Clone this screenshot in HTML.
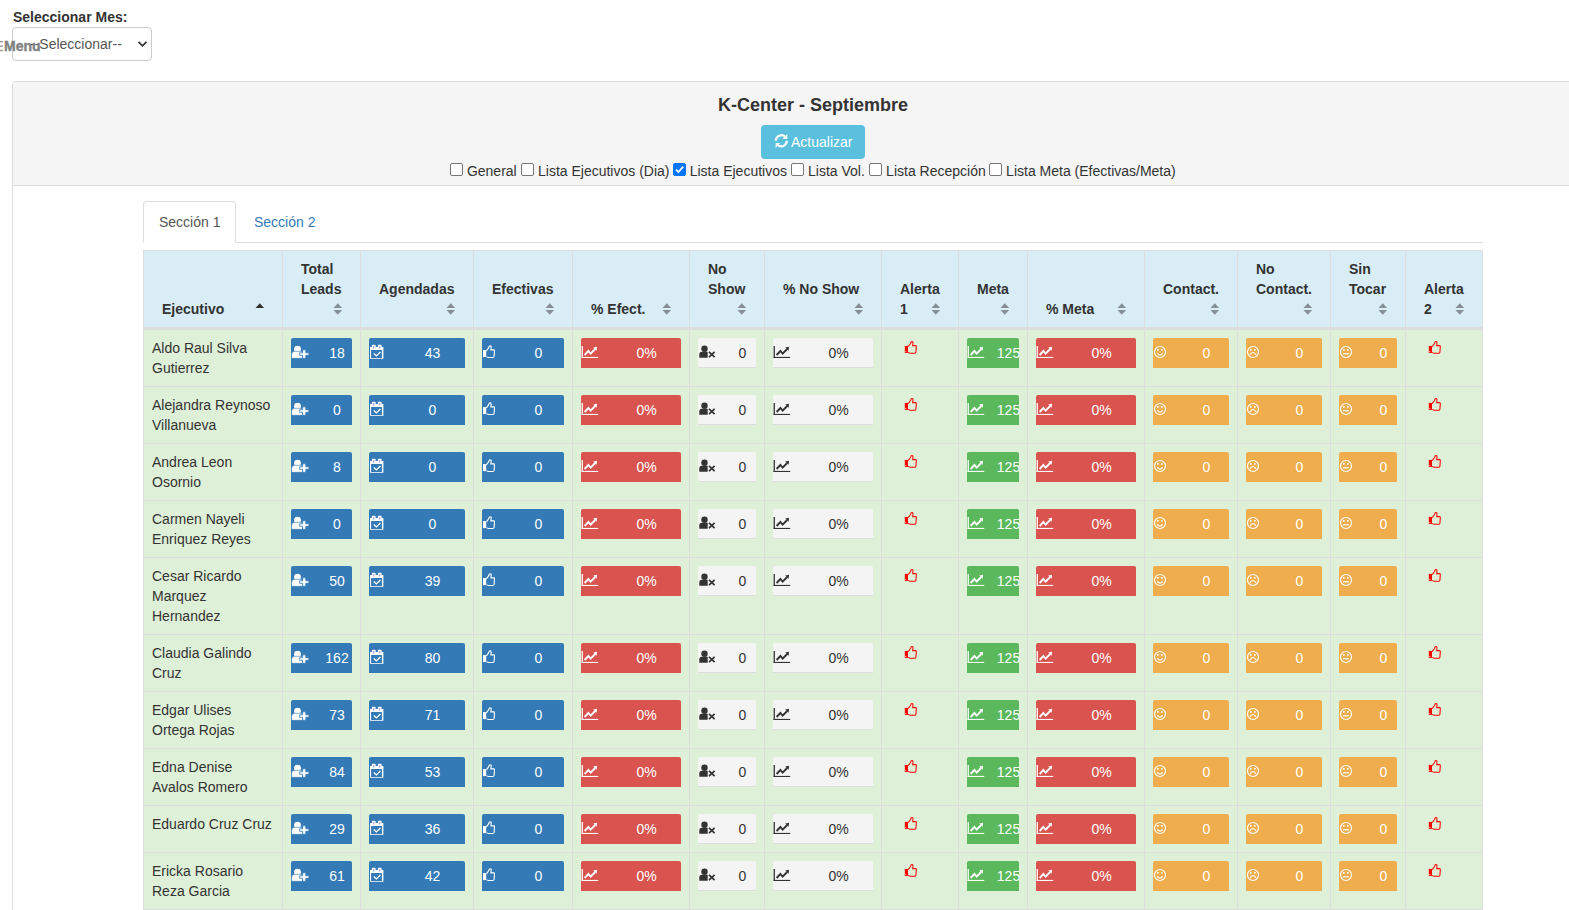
<!DOCTYPE html>
<html><head><meta charset="utf-8"><title>K-Center</title>
<style>
*{box-sizing:border-box}
html,body{margin:0;padding:0;background:#fff;overflow:hidden}
body{font-family:"Liberation Sans",sans-serif;font-size:14px;line-height:20px;color:#333;width:1569px;height:910px;position:relative}
.abs{position:absolute}
#lbl{left:13px;top:7px;font-weight:bold;white-space:nowrap}
#sel{left:12px;top:27px;width:140px;height:34px;border:1px solid #ccc;border-radius:4px;background:#fff}
#seltxt{left:30px;top:34px;color:#555;white-space:nowrap}
#menu{left:4px;top:36px;font-weight:bold;color:#808080;white-space:nowrap;-webkit-text-stroke:0.35px #808080}
#panel{left:12px;top:81px;width:1602px;height:900px;border:1px solid #ddd;border-radius:4px;background:#fff}
#ph{left:0;top:0;width:100%;height:104px;background:#f5f5f5;border-bottom:1px solid #ddd;border-radius:3px 3px 0 0}
#title{left:0;width:1600px;top:12px;text-align:center;font-size:18px;font-weight:bold;line-height:22px}
#act{left:748px;top:43px;width:104px;height:34px;background:#5bc0de;border-radius:4px;color:#fff}
#act span{position:absolute;left:30px;top:7px}
#chk{left:0;width:1600px;top:0;height:100px}
.cbt{position:absolute;top:79px;white-space:nowrap}
.cb{position:absolute;top:81px;width:13px;height:13px;border:1px solid #767676;border-radius:2px;background:#fff}
.cb.on{background:#0075ff;border-color:#0075ff}
.cb.on svg{position:absolute;left:0;top:0;width:11px;height:11px}
#tabs{left:143px;top:201px;width:1340px;height:42px;border-bottom:1px solid #ddd}
.tab{position:absolute;top:0;height:42px;padding:10px 15px;line-height:20px;white-space:nowrap}
#t1{left:0;width:93px;border:1px solid #ddd;border-bottom-color:#fff;border-radius:4px 4px 0 0;background:#fff;color:#555}
#t2{left:96px;top:1px;color:#337ab7}
table{position:absolute;left:143px;top:250px;border-collapse:collapse;table-layout:fixed;width:1340px}
th,td{border:1px solid #ddd;padding:8px;line-height:20px;vertical-align:top;text-align:left}
th{background:#d9edf7;vertical-align:bottom;padding-left:18px;position:relative;height:77px;white-space:nowrap;font-weight:bold}
thead tr{border-bottom:3px solid #ddd}
thead th{border-bottom:3px solid #ddd}
td{background:#dff0d8}
.srt{position:absolute;right:17px;bottom:12px;width:10px;height:12px}
.b{position:relative;height:30px;border-radius:2px 2px 0 0;color:#fff;overflow:hidden}
.b span{position:absolute;left:31px;right:0;top:5px;display:flex;justify-content:center;white-space:nowrap}
.b .ic{position:absolute;left:0;top:0;width:30px;height:30px;overflow:visible}
.bp{background:#337ab7}
.bd{background:#d9534f}
.bs{background:#5cb85c}
.bw{background:#f0ad4e}
.bg{background:#f4f4f4;color:#333;border-bottom:1px solid #ddd}
.th{position:absolute;width:16px;height:16px;overflow:visible}
</style></head><body>
<div id="lbl" class="abs">Seleccionar Mes:</div>
<div id="sel" class="abs"></div>
<div id="seltxt" class="abs">--Seleccionar--</div>
<svg class="abs" style="left:137px;top:40px" width="11" height="8"><path d="M1.5 1.8 L5.5 5.8 L9.5 1.8" stroke="#333" stroke-width="1.8" fill="none"/></svg>
<div id="menu" class="abs">Menu</div>
<svg class="abs" style="left:0;top:40px" width="4" height="12"><rect x="-10" y="1" width="13" height="1.4" fill="#999"/><rect x="-10" y="5.4" width="13" height="1.4" fill="#999"/><rect x="-10" y="9.8" width="13" height="1.4" fill="#999"/></svg>
<div id="panel" class="abs"><div id="ph" class="abs">
<div id="title" class="abs">K-Center - Septiembre</div>
<div id="act" class="abs"><svg class="abs" style="left:12.5px;top:8px;overflow:visible" width="15" height="16" viewBox="0 0 15 16"><path d="M1.8 7.8 A5.5 5.5 0 0 1 11.2 3.9" stroke="#fff" stroke-width="2.2" fill="none"/><path d="M13.3 1 V5.9 H8.5 Z" fill="#fff"/><path d="M12.8 7.8 A5.5 5.5 0 0 1 3.4 11.7" stroke="#fff" stroke-width="2.2" fill="none"/><path d="M1.6 15 V10.1 H6.2 Z" fill="#fff"/></svg><span>Actualizar</span></div>
<div id="chk" class="abs"><span class="cb" style="left:437.1px"></span><span class="cbt" style="left:453.9px">General</span><span class="cb" style="left:508.2px"></span><span class="cbt" style="left:525.0px">Lista Ejecutivos (Dia)</span><span class="cb on" style="left:659.9px"><svg viewBox="0 0 11 11"><path d="M2 5.6 L4.4 8 L9.2 2.6" stroke="#fff" stroke-width="1.8" fill="none"/></svg></span><span class="cbt" style="left:676.7px">Lista Ejecutivos</span><span class="cb" style="left:778.2px"></span><span class="cbt" style="left:795.0px">Lista Vol.</span><span class="cb" style="left:856.3px"></span><span class="cbt" style="left:873.1px">Lista Recepción</span><span class="cb" style="left:976.3px"></span><span class="cbt" style="left:993.1px">Lista Meta (Efectivas/Meta)</span></div>
</div></div>
<div id="tabs" class="abs"><div id="t1" class="tab">Sección 1</div><div id="t2" class="tab">Sección 2</div></div>
<table><colgroup><col style="width:139px"><col style="width:78px"><col style="width:113px"><col style="width:99px"><col style="width:117px"><col style="width:75px"><col style="width:117px"><col style="width:77px"><col style="width:69px"><col style="width:117px"><col style="width:93px"><col style="width:93px"><col style="width:75px"><col style="width:77px"></colgroup>
<thead><tr>
<th>&nbsp;<br>&nbsp;<br>Ejecutivo<svg class="srt" viewBox="0 0 10 12" overflow="visible"><path d="M0.5 5 L4.8 0.2 L9.1 5 Z" fill="#333"/></svg></th>
<th>Total<br>Leads<br>&nbsp;<svg class="srt" viewBox="0 0 10 12" overflow="visible"><path d="M0.5 5 L4.8 0.2 L9.1 5 Z M0.5 7 L9.1 7 L4.8 11.8 Z" fill="#868f95"/></svg></th>
<th>&nbsp;<br>Agendadas<br>&nbsp;<svg class="srt" viewBox="0 0 10 12" overflow="visible"><path d="M0.5 5 L4.8 0.2 L9.1 5 Z M0.5 7 L9.1 7 L4.8 11.8 Z" fill="#868f95"/></svg></th>
<th>&nbsp;<br>Efectivas<br>&nbsp;<svg class="srt" viewBox="0 0 10 12" overflow="visible"><path d="M0.5 5 L4.8 0.2 L9.1 5 Z M0.5 7 L9.1 7 L4.8 11.8 Z" fill="#868f95"/></svg></th>
<th>&nbsp;<br>&nbsp;<br>% Efect.<svg class="srt" viewBox="0 0 10 12" overflow="visible"><path d="M0.5 5 L4.8 0.2 L9.1 5 Z M0.5 7 L9.1 7 L4.8 11.8 Z" fill="#868f95"/></svg></th>
<th>No<br>Show<br>&nbsp;<svg class="srt" viewBox="0 0 10 12" overflow="visible"><path d="M0.5 5 L4.8 0.2 L9.1 5 Z M0.5 7 L9.1 7 L4.8 11.8 Z" fill="#868f95"/></svg></th>
<th>&nbsp;<br>% No Show<br>&nbsp;<svg class="srt" viewBox="0 0 10 12" overflow="visible"><path d="M0.5 5 L4.8 0.2 L9.1 5 Z M0.5 7 L9.1 7 L4.8 11.8 Z" fill="#868f95"/></svg></th>
<th>&nbsp;<br>Alerta<br>1<svg class="srt" viewBox="0 0 10 12" overflow="visible"><path d="M0.5 5 L4.8 0.2 L9.1 5 Z M0.5 7 L9.1 7 L4.8 11.8 Z" fill="#868f95"/></svg></th>
<th>&nbsp;<br>Meta<br>&nbsp;<svg class="srt" viewBox="0 0 10 12" overflow="visible"><path d="M0.5 5 L4.8 0.2 L9.1 5 Z M0.5 7 L9.1 7 L4.8 11.8 Z" fill="#868f95"/></svg></th>
<th>&nbsp;<br>&nbsp;<br>% Meta<svg class="srt" viewBox="0 0 10 12" overflow="visible"><path d="M0.5 5 L4.8 0.2 L9.1 5 Z M0.5 7 L9.1 7 L4.8 11.8 Z" fill="#868f95"/></svg></th>
<th>&nbsp;<br>Contact.<br>&nbsp;<svg class="srt" viewBox="0 0 10 12" overflow="visible"><path d="M0.5 5 L4.8 0.2 L9.1 5 Z M0.5 7 L9.1 7 L4.8 11.8 Z" fill="#868f95"/></svg></th>
<th>No<br>Contact.<br>&nbsp;<svg class="srt" viewBox="0 0 10 12" overflow="visible"><path d="M0.5 5 L4.8 0.2 L9.1 5 Z M0.5 7 L9.1 7 L4.8 11.8 Z" fill="#868f95"/></svg></th>
<th>Sin<br>Tocar<br>&nbsp;<svg class="srt" viewBox="0 0 10 12" overflow="visible"><path d="M0.5 5 L4.8 0.2 L9.1 5 Z M0.5 7 L9.1 7 L4.8 11.8 Z" fill="#868f95"/></svg></th>
<th>&nbsp;<br>Alerta<br>2<svg class="srt" viewBox="0 0 10 12" overflow="visible"><path d="M0.5 5 L4.8 0.2 L9.1 5 Z M0.5 7 L9.1 7 L4.8 11.8 Z" fill="#868f95"/></svg></th>
</tr></thead><tbody>
<tr>
<td>Aldo Raul Silva<br>Gutierrez</td>
<td><div class="b bp"><svg class="ic" viewBox="0 0 30 30" overflow="visible"><circle cx="6.5" cy="11.2" r="3.4" fill="#fff"/>
<path d="M0.6 20.3 V16.4 Q0.6 13.3 3.6 13.3 H9.2 Q11.8 13.3 11.8 16 V20.3 Z" fill="#fff" stroke="#337ab7" stroke-width="0.6"/>
<path d="M11.6 11.8 H14.8 V14.8 H17.9 V17.3 H14.8 V20.3 H11.6 V17.3 H8.6 V14.8 H11.6 Z" fill="#fff" stroke="#337ab7" stroke-width="0.8"/></svg><span>18</span></div></td>
<td><div class="b bp"><svg class="ic" viewBox="0 0 30 30" overflow="visible"><path d="M1 9 H14.4 V20.8 H1 Z M2.1 11.9 V19.9 H12.9 V11.9 Z" fill="#fff" fill-rule="evenodd"/>
<rect x="2.9" y="6.8" width="3.7" height="3.6" rx="0.8" fill="#fff"/>
<rect x="8.9" y="6.8" width="3.7" height="3.6" rx="0.8" fill="#fff"/>
<rect x="4.2" y="8.2" width="1.1" height="2.3" fill="#8a6fd0" opacity="0.8"/>
<rect x="10.2" y="8.2" width="1.1" height="2.3" fill="#8a6fd0" opacity="0.8"/>
<path d="M4.8 15.5 L7.4 17.9 L11.4 14" stroke="#fff" stroke-width="1.4" fill="none"/></svg><span>43</span></div></td>
<td><div class="b bp"><svg class="ic" viewBox="0 0 30 30" overflow="visible"><g transform="translate(0.2,5.2)">
<rect x="0.8" y="6.9" width="3.2" height="7" fill="#fff"/>
<path d="M4.2 7.6 L6.2 5 Q6.8 4.2 7 3 Q7.3 2.5 8.1 2.5 Q9.1 2.6 9 3.8 L8.7 6.6 L11.6 6.6 Q12.4 6.8 12.3 7.8 L11.9 13.3 Q11.7 14.3 10.5 14.3 L6 14.2 Q5 14 4.2 13.4" stroke="#fff" stroke-width="1.15" fill="none"/>
</g></svg><span>0</span></div></td>
<td><div class="b bd"><svg class="ic" viewBox="0 0 30 30" overflow="visible"><rect x="0.6" y="8" width="1.3" height="12" fill="currentColor"/>
<rect x="0.6" y="18.9" width="16.6" height="1.1" fill="currentColor"/>
<path d="M3.6 17 L7.4 13 L9.6 15.6 L14.2 11" stroke="currentColor" stroke-width="1.9" fill="none"/>
<path d="M12.2 9.4 L16.1 8.8 L15.6 12.7 Z" fill="currentColor"/></svg><span>0%</span></div></td>
<td><div class="b bg"><svg class="ic" viewBox="0 0 30 30" overflow="visible"><circle cx="6.5" cy="10.7" r="3.2" fill="#333"/>
<path d="M1.3 19.8 V16.2 Q1.3 13.8 3.8 13.8 H9.7 V19.8 Z" fill="#333"/>
<path d="M11 13.9 L16.6 19.2 M16.6 13.9 L11 19.2" stroke="#333" stroke-width="1.7"/></svg><span>0</span></div></td>
<td><div class="b bg"><svg class="ic" viewBox="0 0 30 30" overflow="visible"><rect x="0.6" y="8" width="1.3" height="12" fill="currentColor"/>
<rect x="0.6" y="18.9" width="16.6" height="1.1" fill="currentColor"/>
<path d="M3.6 17 L7.4 13 L9.6 15.6 L14.2 11" stroke="currentColor" stroke-width="1.9" fill="none"/>
<path d="M12.2 9.4 L16.1 8.8 L15.6 12.7 Z" fill="currentColor"/></svg><span>0%</span></div></td>
<td><svg class="th" style="margin-left:14px;margin-top:1px" viewBox="0 0 16 16" overflow="visible"><rect x="0.8" y="6.9" width="3.2" height="7" fill="#f00"/>
<rect x="1.3" y="12" width="0.9" height="0.9" fill="#f3e8e0"/>
<path d="M4.2 7.6 L6.2 5 Q6.8 4.2 7 3 Q7.3 2.5 8.1 2.5 Q9.1 2.6 9 3.8 L8.7 6.6 L11.6 6.6 Q12.4 6.8 12.3 7.8 L11.9 13.3 Q11.7 14.3 10.5 14.3 L6 14.2 Q5 14 4.2 13.4" stroke="#f00" stroke-width="1.05" fill="none"/></svg></td>
<td><div class="b bs"><svg class="ic" viewBox="0 0 30 30" overflow="visible"><rect x="0.6" y="8" width="1.3" height="12" fill="currentColor"/>
<rect x="0.6" y="18.9" width="16.6" height="1.1" fill="currentColor"/>
<path d="M3.6 17 L7.4 13 L9.6 15.6 L14.2 11" stroke="currentColor" stroke-width="1.9" fill="none"/>
<path d="M12.2 9.4 L16.1 8.8 L15.6 12.7 Z" fill="currentColor"/></svg><span>125</span></div></td>
<td><div class="b bd"><svg class="ic" viewBox="0 0 30 30" overflow="visible"><rect x="0.6" y="8" width="1.3" height="12" fill="currentColor"/>
<rect x="0.6" y="18.9" width="16.6" height="1.1" fill="currentColor"/>
<path d="M3.6 17 L7.4 13 L9.6 15.6 L14.2 11" stroke="currentColor" stroke-width="1.9" fill="none"/>
<path d="M12.2 9.4 L16.1 8.8 L15.6 12.7 Z" fill="currentColor"/></svg><span>0%</span></div></td>
<td><div class="b bw"><svg class="ic" viewBox="0 0 30 30" overflow="visible"><circle cx="7" cy="14" r="5.5" stroke="#fff" stroke-width="1.2" fill="none"/>
<rect x="4" y="11" width="1.6" height="1.7" fill="#fff"/>
<rect x="8" y="11" width="1.6" height="1.7" fill="#fff"/>
<path d="M4.3 15.3 Q7 18.6 9.7 15.3" stroke="#fff" stroke-width="1.1" fill="none"/></svg><span>0</span></div></td>
<td><div class="b bw"><svg class="ic" viewBox="0 0 30 30" overflow="visible"><circle cx="7" cy="14" r="5.5" stroke="#fff" stroke-width="1.2" fill="none"/>
<rect x="4" y="11" width="1.6" height="1.7" fill="#fff"/>
<rect x="8" y="11" width="1.6" height="1.7" fill="#fff"/>
<path d="M3.9 16.9 Q7 12.2 10.1 16.9" stroke="#fff" stroke-width="1.1" fill="none"/></svg><span>0</span></div></td>
<td><div class="b bw"><svg class="ic" viewBox="0 0 30 30" overflow="visible"><circle cx="7" cy="14" r="5.5" stroke="#fff" stroke-width="1.2" fill="none"/>
<rect x="4" y="11" width="1.6" height="1.7" fill="#fff"/>
<rect x="8" y="11" width="1.6" height="1.7" fill="#fff"/>
<rect x="4" y="15.2" width="6" height="1.2" fill="#fff"/></svg><span>0</span></div></td>
<td><svg class="th" style="margin-left:14px;margin-top:1px" viewBox="0 0 16 16" overflow="visible"><rect x="0.8" y="6.9" width="3.2" height="7" fill="#f00"/>
<rect x="1.3" y="12" width="0.9" height="0.9" fill="#f3e8e0"/>
<path d="M4.2 7.6 L6.2 5 Q6.8 4.2 7 3 Q7.3 2.5 8.1 2.5 Q9.1 2.6 9 3.8 L8.7 6.6 L11.6 6.6 Q12.4 6.8 12.3 7.8 L11.9 13.3 Q11.7 14.3 10.5 14.3 L6 14.2 Q5 14 4.2 13.4" stroke="#f00" stroke-width="1.05" fill="none"/></svg></td>
</tr>
<tr>
<td>Alejandra Reynoso<br>Villanueva</td>
<td><div class="b bp"><svg class="ic" viewBox="0 0 30 30" overflow="visible"><circle cx="6.5" cy="11.2" r="3.4" fill="#fff"/>
<path d="M0.6 20.3 V16.4 Q0.6 13.3 3.6 13.3 H9.2 Q11.8 13.3 11.8 16 V20.3 Z" fill="#fff" stroke="#337ab7" stroke-width="0.6"/>
<path d="M11.6 11.8 H14.8 V14.8 H17.9 V17.3 H14.8 V20.3 H11.6 V17.3 H8.6 V14.8 H11.6 Z" fill="#fff" stroke="#337ab7" stroke-width="0.8"/></svg><span>0</span></div></td>
<td><div class="b bp"><svg class="ic" viewBox="0 0 30 30" overflow="visible"><path d="M1 9 H14.4 V20.8 H1 Z M2.1 11.9 V19.9 H12.9 V11.9 Z" fill="#fff" fill-rule="evenodd"/>
<rect x="2.9" y="6.8" width="3.7" height="3.6" rx="0.8" fill="#fff"/>
<rect x="8.9" y="6.8" width="3.7" height="3.6" rx="0.8" fill="#fff"/>
<rect x="4.2" y="8.2" width="1.1" height="2.3" fill="#8a6fd0" opacity="0.8"/>
<rect x="10.2" y="8.2" width="1.1" height="2.3" fill="#8a6fd0" opacity="0.8"/>
<path d="M4.8 15.5 L7.4 17.9 L11.4 14" stroke="#fff" stroke-width="1.4" fill="none"/></svg><span>0</span></div></td>
<td><div class="b bp"><svg class="ic" viewBox="0 0 30 30" overflow="visible"><g transform="translate(0.2,5.2)">
<rect x="0.8" y="6.9" width="3.2" height="7" fill="#fff"/>
<path d="M4.2 7.6 L6.2 5 Q6.8 4.2 7 3 Q7.3 2.5 8.1 2.5 Q9.1 2.6 9 3.8 L8.7 6.6 L11.6 6.6 Q12.4 6.8 12.3 7.8 L11.9 13.3 Q11.7 14.3 10.5 14.3 L6 14.2 Q5 14 4.2 13.4" stroke="#fff" stroke-width="1.15" fill="none"/>
</g></svg><span>0</span></div></td>
<td><div class="b bd"><svg class="ic" viewBox="0 0 30 30" overflow="visible"><rect x="0.6" y="8" width="1.3" height="12" fill="currentColor"/>
<rect x="0.6" y="18.9" width="16.6" height="1.1" fill="currentColor"/>
<path d="M3.6 17 L7.4 13 L9.6 15.6 L14.2 11" stroke="currentColor" stroke-width="1.9" fill="none"/>
<path d="M12.2 9.4 L16.1 8.8 L15.6 12.7 Z" fill="currentColor"/></svg><span>0%</span></div></td>
<td><div class="b bg"><svg class="ic" viewBox="0 0 30 30" overflow="visible"><circle cx="6.5" cy="10.7" r="3.2" fill="#333"/>
<path d="M1.3 19.8 V16.2 Q1.3 13.8 3.8 13.8 H9.7 V19.8 Z" fill="#333"/>
<path d="M11 13.9 L16.6 19.2 M16.6 13.9 L11 19.2" stroke="#333" stroke-width="1.7"/></svg><span>0</span></div></td>
<td><div class="b bg"><svg class="ic" viewBox="0 0 30 30" overflow="visible"><rect x="0.6" y="8" width="1.3" height="12" fill="currentColor"/>
<rect x="0.6" y="18.9" width="16.6" height="1.1" fill="currentColor"/>
<path d="M3.6 17 L7.4 13 L9.6 15.6 L14.2 11" stroke="currentColor" stroke-width="1.9" fill="none"/>
<path d="M12.2 9.4 L16.1 8.8 L15.6 12.7 Z" fill="currentColor"/></svg><span>0%</span></div></td>
<td><svg class="th" style="margin-left:14px;margin-top:1px" viewBox="0 0 16 16" overflow="visible"><rect x="0.8" y="6.9" width="3.2" height="7" fill="#f00"/>
<rect x="1.3" y="12" width="0.9" height="0.9" fill="#f3e8e0"/>
<path d="M4.2 7.6 L6.2 5 Q6.8 4.2 7 3 Q7.3 2.5 8.1 2.5 Q9.1 2.6 9 3.8 L8.7 6.6 L11.6 6.6 Q12.4 6.8 12.3 7.8 L11.9 13.3 Q11.7 14.3 10.5 14.3 L6 14.2 Q5 14 4.2 13.4" stroke="#f00" stroke-width="1.05" fill="none"/></svg></td>
<td><div class="b bs"><svg class="ic" viewBox="0 0 30 30" overflow="visible"><rect x="0.6" y="8" width="1.3" height="12" fill="currentColor"/>
<rect x="0.6" y="18.9" width="16.6" height="1.1" fill="currentColor"/>
<path d="M3.6 17 L7.4 13 L9.6 15.6 L14.2 11" stroke="currentColor" stroke-width="1.9" fill="none"/>
<path d="M12.2 9.4 L16.1 8.8 L15.6 12.7 Z" fill="currentColor"/></svg><span>125</span></div></td>
<td><div class="b bd"><svg class="ic" viewBox="0 0 30 30" overflow="visible"><rect x="0.6" y="8" width="1.3" height="12" fill="currentColor"/>
<rect x="0.6" y="18.9" width="16.6" height="1.1" fill="currentColor"/>
<path d="M3.6 17 L7.4 13 L9.6 15.6 L14.2 11" stroke="currentColor" stroke-width="1.9" fill="none"/>
<path d="M12.2 9.4 L16.1 8.8 L15.6 12.7 Z" fill="currentColor"/></svg><span>0%</span></div></td>
<td><div class="b bw"><svg class="ic" viewBox="0 0 30 30" overflow="visible"><circle cx="7" cy="14" r="5.5" stroke="#fff" stroke-width="1.2" fill="none"/>
<rect x="4" y="11" width="1.6" height="1.7" fill="#fff"/>
<rect x="8" y="11" width="1.6" height="1.7" fill="#fff"/>
<path d="M4.3 15.3 Q7 18.6 9.7 15.3" stroke="#fff" stroke-width="1.1" fill="none"/></svg><span>0</span></div></td>
<td><div class="b bw"><svg class="ic" viewBox="0 0 30 30" overflow="visible"><circle cx="7" cy="14" r="5.5" stroke="#fff" stroke-width="1.2" fill="none"/>
<rect x="4" y="11" width="1.6" height="1.7" fill="#fff"/>
<rect x="8" y="11" width="1.6" height="1.7" fill="#fff"/>
<path d="M3.9 16.9 Q7 12.2 10.1 16.9" stroke="#fff" stroke-width="1.1" fill="none"/></svg><span>0</span></div></td>
<td><div class="b bw"><svg class="ic" viewBox="0 0 30 30" overflow="visible"><circle cx="7" cy="14" r="5.5" stroke="#fff" stroke-width="1.2" fill="none"/>
<rect x="4" y="11" width="1.6" height="1.7" fill="#fff"/>
<rect x="8" y="11" width="1.6" height="1.7" fill="#fff"/>
<rect x="4" y="15.2" width="6" height="1.2" fill="#fff"/></svg><span>0</span></div></td>
<td><svg class="th" style="margin-left:14px;margin-top:1px" viewBox="0 0 16 16" overflow="visible"><rect x="0.8" y="6.9" width="3.2" height="7" fill="#f00"/>
<rect x="1.3" y="12" width="0.9" height="0.9" fill="#f3e8e0"/>
<path d="M4.2 7.6 L6.2 5 Q6.8 4.2 7 3 Q7.3 2.5 8.1 2.5 Q9.1 2.6 9 3.8 L8.7 6.6 L11.6 6.6 Q12.4 6.8 12.3 7.8 L11.9 13.3 Q11.7 14.3 10.5 14.3 L6 14.2 Q5 14 4.2 13.4" stroke="#f00" stroke-width="1.05" fill="none"/></svg></td>
</tr>
<tr>
<td>Andrea Leon<br>Osornio</td>
<td><div class="b bp"><svg class="ic" viewBox="0 0 30 30" overflow="visible"><circle cx="6.5" cy="11.2" r="3.4" fill="#fff"/>
<path d="M0.6 20.3 V16.4 Q0.6 13.3 3.6 13.3 H9.2 Q11.8 13.3 11.8 16 V20.3 Z" fill="#fff" stroke="#337ab7" stroke-width="0.6"/>
<path d="M11.6 11.8 H14.8 V14.8 H17.9 V17.3 H14.8 V20.3 H11.6 V17.3 H8.6 V14.8 H11.6 Z" fill="#fff" stroke="#337ab7" stroke-width="0.8"/></svg><span>8</span></div></td>
<td><div class="b bp"><svg class="ic" viewBox="0 0 30 30" overflow="visible"><path d="M1 9 H14.4 V20.8 H1 Z M2.1 11.9 V19.9 H12.9 V11.9 Z" fill="#fff" fill-rule="evenodd"/>
<rect x="2.9" y="6.8" width="3.7" height="3.6" rx="0.8" fill="#fff"/>
<rect x="8.9" y="6.8" width="3.7" height="3.6" rx="0.8" fill="#fff"/>
<rect x="4.2" y="8.2" width="1.1" height="2.3" fill="#8a6fd0" opacity="0.8"/>
<rect x="10.2" y="8.2" width="1.1" height="2.3" fill="#8a6fd0" opacity="0.8"/>
<path d="M4.8 15.5 L7.4 17.9 L11.4 14" stroke="#fff" stroke-width="1.4" fill="none"/></svg><span>0</span></div></td>
<td><div class="b bp"><svg class="ic" viewBox="0 0 30 30" overflow="visible"><g transform="translate(0.2,5.2)">
<rect x="0.8" y="6.9" width="3.2" height="7" fill="#fff"/>
<path d="M4.2 7.6 L6.2 5 Q6.8 4.2 7 3 Q7.3 2.5 8.1 2.5 Q9.1 2.6 9 3.8 L8.7 6.6 L11.6 6.6 Q12.4 6.8 12.3 7.8 L11.9 13.3 Q11.7 14.3 10.5 14.3 L6 14.2 Q5 14 4.2 13.4" stroke="#fff" stroke-width="1.15" fill="none"/>
</g></svg><span>0</span></div></td>
<td><div class="b bd"><svg class="ic" viewBox="0 0 30 30" overflow="visible"><rect x="0.6" y="8" width="1.3" height="12" fill="currentColor"/>
<rect x="0.6" y="18.9" width="16.6" height="1.1" fill="currentColor"/>
<path d="M3.6 17 L7.4 13 L9.6 15.6 L14.2 11" stroke="currentColor" stroke-width="1.9" fill="none"/>
<path d="M12.2 9.4 L16.1 8.8 L15.6 12.7 Z" fill="currentColor"/></svg><span>0%</span></div></td>
<td><div class="b bg"><svg class="ic" viewBox="0 0 30 30" overflow="visible"><circle cx="6.5" cy="10.7" r="3.2" fill="#333"/>
<path d="M1.3 19.8 V16.2 Q1.3 13.8 3.8 13.8 H9.7 V19.8 Z" fill="#333"/>
<path d="M11 13.9 L16.6 19.2 M16.6 13.9 L11 19.2" stroke="#333" stroke-width="1.7"/></svg><span>0</span></div></td>
<td><div class="b bg"><svg class="ic" viewBox="0 0 30 30" overflow="visible"><rect x="0.6" y="8" width="1.3" height="12" fill="currentColor"/>
<rect x="0.6" y="18.9" width="16.6" height="1.1" fill="currentColor"/>
<path d="M3.6 17 L7.4 13 L9.6 15.6 L14.2 11" stroke="currentColor" stroke-width="1.9" fill="none"/>
<path d="M12.2 9.4 L16.1 8.8 L15.6 12.7 Z" fill="currentColor"/></svg><span>0%</span></div></td>
<td><svg class="th" style="margin-left:14px;margin-top:1px" viewBox="0 0 16 16" overflow="visible"><rect x="0.8" y="6.9" width="3.2" height="7" fill="#f00"/>
<rect x="1.3" y="12" width="0.9" height="0.9" fill="#f3e8e0"/>
<path d="M4.2 7.6 L6.2 5 Q6.8 4.2 7 3 Q7.3 2.5 8.1 2.5 Q9.1 2.6 9 3.8 L8.7 6.6 L11.6 6.6 Q12.4 6.8 12.3 7.8 L11.9 13.3 Q11.7 14.3 10.5 14.3 L6 14.2 Q5 14 4.2 13.4" stroke="#f00" stroke-width="1.05" fill="none"/></svg></td>
<td><div class="b bs"><svg class="ic" viewBox="0 0 30 30" overflow="visible"><rect x="0.6" y="8" width="1.3" height="12" fill="currentColor"/>
<rect x="0.6" y="18.9" width="16.6" height="1.1" fill="currentColor"/>
<path d="M3.6 17 L7.4 13 L9.6 15.6 L14.2 11" stroke="currentColor" stroke-width="1.9" fill="none"/>
<path d="M12.2 9.4 L16.1 8.8 L15.6 12.7 Z" fill="currentColor"/></svg><span>125</span></div></td>
<td><div class="b bd"><svg class="ic" viewBox="0 0 30 30" overflow="visible"><rect x="0.6" y="8" width="1.3" height="12" fill="currentColor"/>
<rect x="0.6" y="18.9" width="16.6" height="1.1" fill="currentColor"/>
<path d="M3.6 17 L7.4 13 L9.6 15.6 L14.2 11" stroke="currentColor" stroke-width="1.9" fill="none"/>
<path d="M12.2 9.4 L16.1 8.8 L15.6 12.7 Z" fill="currentColor"/></svg><span>0%</span></div></td>
<td><div class="b bw"><svg class="ic" viewBox="0 0 30 30" overflow="visible"><circle cx="7" cy="14" r="5.5" stroke="#fff" stroke-width="1.2" fill="none"/>
<rect x="4" y="11" width="1.6" height="1.7" fill="#fff"/>
<rect x="8" y="11" width="1.6" height="1.7" fill="#fff"/>
<path d="M4.3 15.3 Q7 18.6 9.7 15.3" stroke="#fff" stroke-width="1.1" fill="none"/></svg><span>0</span></div></td>
<td><div class="b bw"><svg class="ic" viewBox="0 0 30 30" overflow="visible"><circle cx="7" cy="14" r="5.5" stroke="#fff" stroke-width="1.2" fill="none"/>
<rect x="4" y="11" width="1.6" height="1.7" fill="#fff"/>
<rect x="8" y="11" width="1.6" height="1.7" fill="#fff"/>
<path d="M3.9 16.9 Q7 12.2 10.1 16.9" stroke="#fff" stroke-width="1.1" fill="none"/></svg><span>0</span></div></td>
<td><div class="b bw"><svg class="ic" viewBox="0 0 30 30" overflow="visible"><circle cx="7" cy="14" r="5.5" stroke="#fff" stroke-width="1.2" fill="none"/>
<rect x="4" y="11" width="1.6" height="1.7" fill="#fff"/>
<rect x="8" y="11" width="1.6" height="1.7" fill="#fff"/>
<rect x="4" y="15.2" width="6" height="1.2" fill="#fff"/></svg><span>0</span></div></td>
<td><svg class="th" style="margin-left:14px;margin-top:1px" viewBox="0 0 16 16" overflow="visible"><rect x="0.8" y="6.9" width="3.2" height="7" fill="#f00"/>
<rect x="1.3" y="12" width="0.9" height="0.9" fill="#f3e8e0"/>
<path d="M4.2 7.6 L6.2 5 Q6.8 4.2 7 3 Q7.3 2.5 8.1 2.5 Q9.1 2.6 9 3.8 L8.7 6.6 L11.6 6.6 Q12.4 6.8 12.3 7.8 L11.9 13.3 Q11.7 14.3 10.5 14.3 L6 14.2 Q5 14 4.2 13.4" stroke="#f00" stroke-width="1.05" fill="none"/></svg></td>
</tr>
<tr>
<td>Carmen Nayeli<br>Enriquez Reyes</td>
<td><div class="b bp"><svg class="ic" viewBox="0 0 30 30" overflow="visible"><circle cx="6.5" cy="11.2" r="3.4" fill="#fff"/>
<path d="M0.6 20.3 V16.4 Q0.6 13.3 3.6 13.3 H9.2 Q11.8 13.3 11.8 16 V20.3 Z" fill="#fff" stroke="#337ab7" stroke-width="0.6"/>
<path d="M11.6 11.8 H14.8 V14.8 H17.9 V17.3 H14.8 V20.3 H11.6 V17.3 H8.6 V14.8 H11.6 Z" fill="#fff" stroke="#337ab7" stroke-width="0.8"/></svg><span>0</span></div></td>
<td><div class="b bp"><svg class="ic" viewBox="0 0 30 30" overflow="visible"><path d="M1 9 H14.4 V20.8 H1 Z M2.1 11.9 V19.9 H12.9 V11.9 Z" fill="#fff" fill-rule="evenodd"/>
<rect x="2.9" y="6.8" width="3.7" height="3.6" rx="0.8" fill="#fff"/>
<rect x="8.9" y="6.8" width="3.7" height="3.6" rx="0.8" fill="#fff"/>
<rect x="4.2" y="8.2" width="1.1" height="2.3" fill="#8a6fd0" opacity="0.8"/>
<rect x="10.2" y="8.2" width="1.1" height="2.3" fill="#8a6fd0" opacity="0.8"/>
<path d="M4.8 15.5 L7.4 17.9 L11.4 14" stroke="#fff" stroke-width="1.4" fill="none"/></svg><span>0</span></div></td>
<td><div class="b bp"><svg class="ic" viewBox="0 0 30 30" overflow="visible"><g transform="translate(0.2,5.2)">
<rect x="0.8" y="6.9" width="3.2" height="7" fill="#fff"/>
<path d="M4.2 7.6 L6.2 5 Q6.8 4.2 7 3 Q7.3 2.5 8.1 2.5 Q9.1 2.6 9 3.8 L8.7 6.6 L11.6 6.6 Q12.4 6.8 12.3 7.8 L11.9 13.3 Q11.7 14.3 10.5 14.3 L6 14.2 Q5 14 4.2 13.4" stroke="#fff" stroke-width="1.15" fill="none"/>
</g></svg><span>0</span></div></td>
<td><div class="b bd"><svg class="ic" viewBox="0 0 30 30" overflow="visible"><rect x="0.6" y="8" width="1.3" height="12" fill="currentColor"/>
<rect x="0.6" y="18.9" width="16.6" height="1.1" fill="currentColor"/>
<path d="M3.6 17 L7.4 13 L9.6 15.6 L14.2 11" stroke="currentColor" stroke-width="1.9" fill="none"/>
<path d="M12.2 9.4 L16.1 8.8 L15.6 12.7 Z" fill="currentColor"/></svg><span>0%</span></div></td>
<td><div class="b bg"><svg class="ic" viewBox="0 0 30 30" overflow="visible"><circle cx="6.5" cy="10.7" r="3.2" fill="#333"/>
<path d="M1.3 19.8 V16.2 Q1.3 13.8 3.8 13.8 H9.7 V19.8 Z" fill="#333"/>
<path d="M11 13.9 L16.6 19.2 M16.6 13.9 L11 19.2" stroke="#333" stroke-width="1.7"/></svg><span>0</span></div></td>
<td><div class="b bg"><svg class="ic" viewBox="0 0 30 30" overflow="visible"><rect x="0.6" y="8" width="1.3" height="12" fill="currentColor"/>
<rect x="0.6" y="18.9" width="16.6" height="1.1" fill="currentColor"/>
<path d="M3.6 17 L7.4 13 L9.6 15.6 L14.2 11" stroke="currentColor" stroke-width="1.9" fill="none"/>
<path d="M12.2 9.4 L16.1 8.8 L15.6 12.7 Z" fill="currentColor"/></svg><span>0%</span></div></td>
<td><svg class="th" style="margin-left:14px;margin-top:1px" viewBox="0 0 16 16" overflow="visible"><rect x="0.8" y="6.9" width="3.2" height="7" fill="#f00"/>
<rect x="1.3" y="12" width="0.9" height="0.9" fill="#f3e8e0"/>
<path d="M4.2 7.6 L6.2 5 Q6.8 4.2 7 3 Q7.3 2.5 8.1 2.5 Q9.1 2.6 9 3.8 L8.7 6.6 L11.6 6.6 Q12.4 6.8 12.3 7.8 L11.9 13.3 Q11.7 14.3 10.5 14.3 L6 14.2 Q5 14 4.2 13.4" stroke="#f00" stroke-width="1.05" fill="none"/></svg></td>
<td><div class="b bs"><svg class="ic" viewBox="0 0 30 30" overflow="visible"><rect x="0.6" y="8" width="1.3" height="12" fill="currentColor"/>
<rect x="0.6" y="18.9" width="16.6" height="1.1" fill="currentColor"/>
<path d="M3.6 17 L7.4 13 L9.6 15.6 L14.2 11" stroke="currentColor" stroke-width="1.9" fill="none"/>
<path d="M12.2 9.4 L16.1 8.8 L15.6 12.7 Z" fill="currentColor"/></svg><span>125</span></div></td>
<td><div class="b bd"><svg class="ic" viewBox="0 0 30 30" overflow="visible"><rect x="0.6" y="8" width="1.3" height="12" fill="currentColor"/>
<rect x="0.6" y="18.9" width="16.6" height="1.1" fill="currentColor"/>
<path d="M3.6 17 L7.4 13 L9.6 15.6 L14.2 11" stroke="currentColor" stroke-width="1.9" fill="none"/>
<path d="M12.2 9.4 L16.1 8.8 L15.6 12.7 Z" fill="currentColor"/></svg><span>0%</span></div></td>
<td><div class="b bw"><svg class="ic" viewBox="0 0 30 30" overflow="visible"><circle cx="7" cy="14" r="5.5" stroke="#fff" stroke-width="1.2" fill="none"/>
<rect x="4" y="11" width="1.6" height="1.7" fill="#fff"/>
<rect x="8" y="11" width="1.6" height="1.7" fill="#fff"/>
<path d="M4.3 15.3 Q7 18.6 9.7 15.3" stroke="#fff" stroke-width="1.1" fill="none"/></svg><span>0</span></div></td>
<td><div class="b bw"><svg class="ic" viewBox="0 0 30 30" overflow="visible"><circle cx="7" cy="14" r="5.5" stroke="#fff" stroke-width="1.2" fill="none"/>
<rect x="4" y="11" width="1.6" height="1.7" fill="#fff"/>
<rect x="8" y="11" width="1.6" height="1.7" fill="#fff"/>
<path d="M3.9 16.9 Q7 12.2 10.1 16.9" stroke="#fff" stroke-width="1.1" fill="none"/></svg><span>0</span></div></td>
<td><div class="b bw"><svg class="ic" viewBox="0 0 30 30" overflow="visible"><circle cx="7" cy="14" r="5.5" stroke="#fff" stroke-width="1.2" fill="none"/>
<rect x="4" y="11" width="1.6" height="1.7" fill="#fff"/>
<rect x="8" y="11" width="1.6" height="1.7" fill="#fff"/>
<rect x="4" y="15.2" width="6" height="1.2" fill="#fff"/></svg><span>0</span></div></td>
<td><svg class="th" style="margin-left:14px;margin-top:1px" viewBox="0 0 16 16" overflow="visible"><rect x="0.8" y="6.9" width="3.2" height="7" fill="#f00"/>
<rect x="1.3" y="12" width="0.9" height="0.9" fill="#f3e8e0"/>
<path d="M4.2 7.6 L6.2 5 Q6.8 4.2 7 3 Q7.3 2.5 8.1 2.5 Q9.1 2.6 9 3.8 L8.7 6.6 L11.6 6.6 Q12.4 6.8 12.3 7.8 L11.9 13.3 Q11.7 14.3 10.5 14.3 L6 14.2 Q5 14 4.2 13.4" stroke="#f00" stroke-width="1.05" fill="none"/></svg></td>
</tr>
<tr>
<td>Cesar Ricardo<br>Marquez<br>Hernandez</td>
<td><div class="b bp"><svg class="ic" viewBox="0 0 30 30" overflow="visible"><circle cx="6.5" cy="11.2" r="3.4" fill="#fff"/>
<path d="M0.6 20.3 V16.4 Q0.6 13.3 3.6 13.3 H9.2 Q11.8 13.3 11.8 16 V20.3 Z" fill="#fff" stroke="#337ab7" stroke-width="0.6"/>
<path d="M11.6 11.8 H14.8 V14.8 H17.9 V17.3 H14.8 V20.3 H11.6 V17.3 H8.6 V14.8 H11.6 Z" fill="#fff" stroke="#337ab7" stroke-width="0.8"/></svg><span>50</span></div></td>
<td><div class="b bp"><svg class="ic" viewBox="0 0 30 30" overflow="visible"><path d="M1 9 H14.4 V20.8 H1 Z M2.1 11.9 V19.9 H12.9 V11.9 Z" fill="#fff" fill-rule="evenodd"/>
<rect x="2.9" y="6.8" width="3.7" height="3.6" rx="0.8" fill="#fff"/>
<rect x="8.9" y="6.8" width="3.7" height="3.6" rx="0.8" fill="#fff"/>
<rect x="4.2" y="8.2" width="1.1" height="2.3" fill="#8a6fd0" opacity="0.8"/>
<rect x="10.2" y="8.2" width="1.1" height="2.3" fill="#8a6fd0" opacity="0.8"/>
<path d="M4.8 15.5 L7.4 17.9 L11.4 14" stroke="#fff" stroke-width="1.4" fill="none"/></svg><span>39</span></div></td>
<td><div class="b bp"><svg class="ic" viewBox="0 0 30 30" overflow="visible"><g transform="translate(0.2,5.2)">
<rect x="0.8" y="6.9" width="3.2" height="7" fill="#fff"/>
<path d="M4.2 7.6 L6.2 5 Q6.8 4.2 7 3 Q7.3 2.5 8.1 2.5 Q9.1 2.6 9 3.8 L8.7 6.6 L11.6 6.6 Q12.4 6.8 12.3 7.8 L11.9 13.3 Q11.7 14.3 10.5 14.3 L6 14.2 Q5 14 4.2 13.4" stroke="#fff" stroke-width="1.15" fill="none"/>
</g></svg><span>0</span></div></td>
<td><div class="b bd"><svg class="ic" viewBox="0 0 30 30" overflow="visible"><rect x="0.6" y="8" width="1.3" height="12" fill="currentColor"/>
<rect x="0.6" y="18.9" width="16.6" height="1.1" fill="currentColor"/>
<path d="M3.6 17 L7.4 13 L9.6 15.6 L14.2 11" stroke="currentColor" stroke-width="1.9" fill="none"/>
<path d="M12.2 9.4 L16.1 8.8 L15.6 12.7 Z" fill="currentColor"/></svg><span>0%</span></div></td>
<td><div class="b bg"><svg class="ic" viewBox="0 0 30 30" overflow="visible"><circle cx="6.5" cy="10.7" r="3.2" fill="#333"/>
<path d="M1.3 19.8 V16.2 Q1.3 13.8 3.8 13.8 H9.7 V19.8 Z" fill="#333"/>
<path d="M11 13.9 L16.6 19.2 M16.6 13.9 L11 19.2" stroke="#333" stroke-width="1.7"/></svg><span>0</span></div></td>
<td><div class="b bg"><svg class="ic" viewBox="0 0 30 30" overflow="visible"><rect x="0.6" y="8" width="1.3" height="12" fill="currentColor"/>
<rect x="0.6" y="18.9" width="16.6" height="1.1" fill="currentColor"/>
<path d="M3.6 17 L7.4 13 L9.6 15.6 L14.2 11" stroke="currentColor" stroke-width="1.9" fill="none"/>
<path d="M12.2 9.4 L16.1 8.8 L15.6 12.7 Z" fill="currentColor"/></svg><span>0%</span></div></td>
<td><svg class="th" style="margin-left:14px;margin-top:1px" viewBox="0 0 16 16" overflow="visible"><rect x="0.8" y="6.9" width="3.2" height="7" fill="#f00"/>
<rect x="1.3" y="12" width="0.9" height="0.9" fill="#f3e8e0"/>
<path d="M4.2 7.6 L6.2 5 Q6.8 4.2 7 3 Q7.3 2.5 8.1 2.5 Q9.1 2.6 9 3.8 L8.7 6.6 L11.6 6.6 Q12.4 6.8 12.3 7.8 L11.9 13.3 Q11.7 14.3 10.5 14.3 L6 14.2 Q5 14 4.2 13.4" stroke="#f00" stroke-width="1.05" fill="none"/></svg></td>
<td><div class="b bs"><svg class="ic" viewBox="0 0 30 30" overflow="visible"><rect x="0.6" y="8" width="1.3" height="12" fill="currentColor"/>
<rect x="0.6" y="18.9" width="16.6" height="1.1" fill="currentColor"/>
<path d="M3.6 17 L7.4 13 L9.6 15.6 L14.2 11" stroke="currentColor" stroke-width="1.9" fill="none"/>
<path d="M12.2 9.4 L16.1 8.8 L15.6 12.7 Z" fill="currentColor"/></svg><span>125</span></div></td>
<td><div class="b bd"><svg class="ic" viewBox="0 0 30 30" overflow="visible"><rect x="0.6" y="8" width="1.3" height="12" fill="currentColor"/>
<rect x="0.6" y="18.9" width="16.6" height="1.1" fill="currentColor"/>
<path d="M3.6 17 L7.4 13 L9.6 15.6 L14.2 11" stroke="currentColor" stroke-width="1.9" fill="none"/>
<path d="M12.2 9.4 L16.1 8.8 L15.6 12.7 Z" fill="currentColor"/></svg><span>0%</span></div></td>
<td><div class="b bw"><svg class="ic" viewBox="0 0 30 30" overflow="visible"><circle cx="7" cy="14" r="5.5" stroke="#fff" stroke-width="1.2" fill="none"/>
<rect x="4" y="11" width="1.6" height="1.7" fill="#fff"/>
<rect x="8" y="11" width="1.6" height="1.7" fill="#fff"/>
<path d="M4.3 15.3 Q7 18.6 9.7 15.3" stroke="#fff" stroke-width="1.1" fill="none"/></svg><span>0</span></div></td>
<td><div class="b bw"><svg class="ic" viewBox="0 0 30 30" overflow="visible"><circle cx="7" cy="14" r="5.5" stroke="#fff" stroke-width="1.2" fill="none"/>
<rect x="4" y="11" width="1.6" height="1.7" fill="#fff"/>
<rect x="8" y="11" width="1.6" height="1.7" fill="#fff"/>
<path d="M3.9 16.9 Q7 12.2 10.1 16.9" stroke="#fff" stroke-width="1.1" fill="none"/></svg><span>0</span></div></td>
<td><div class="b bw"><svg class="ic" viewBox="0 0 30 30" overflow="visible"><circle cx="7" cy="14" r="5.5" stroke="#fff" stroke-width="1.2" fill="none"/>
<rect x="4" y="11" width="1.6" height="1.7" fill="#fff"/>
<rect x="8" y="11" width="1.6" height="1.7" fill="#fff"/>
<rect x="4" y="15.2" width="6" height="1.2" fill="#fff"/></svg><span>0</span></div></td>
<td><svg class="th" style="margin-left:14px;margin-top:1px" viewBox="0 0 16 16" overflow="visible"><rect x="0.8" y="6.9" width="3.2" height="7" fill="#f00"/>
<rect x="1.3" y="12" width="0.9" height="0.9" fill="#f3e8e0"/>
<path d="M4.2 7.6 L6.2 5 Q6.8 4.2 7 3 Q7.3 2.5 8.1 2.5 Q9.1 2.6 9 3.8 L8.7 6.6 L11.6 6.6 Q12.4 6.8 12.3 7.8 L11.9 13.3 Q11.7 14.3 10.5 14.3 L6 14.2 Q5 14 4.2 13.4" stroke="#f00" stroke-width="1.05" fill="none"/></svg></td>
</tr>
<tr>
<td>Claudia Galindo<br>Cruz</td>
<td><div class="b bp"><svg class="ic" viewBox="0 0 30 30" overflow="visible"><circle cx="6.5" cy="11.2" r="3.4" fill="#fff"/>
<path d="M0.6 20.3 V16.4 Q0.6 13.3 3.6 13.3 H9.2 Q11.8 13.3 11.8 16 V20.3 Z" fill="#fff" stroke="#337ab7" stroke-width="0.6"/>
<path d="M11.6 11.8 H14.8 V14.8 H17.9 V17.3 H14.8 V20.3 H11.6 V17.3 H8.6 V14.8 H11.6 Z" fill="#fff" stroke="#337ab7" stroke-width="0.8"/></svg><span>162</span></div></td>
<td><div class="b bp"><svg class="ic" viewBox="0 0 30 30" overflow="visible"><path d="M1 9 H14.4 V20.8 H1 Z M2.1 11.9 V19.9 H12.9 V11.9 Z" fill="#fff" fill-rule="evenodd"/>
<rect x="2.9" y="6.8" width="3.7" height="3.6" rx="0.8" fill="#fff"/>
<rect x="8.9" y="6.8" width="3.7" height="3.6" rx="0.8" fill="#fff"/>
<rect x="4.2" y="8.2" width="1.1" height="2.3" fill="#8a6fd0" opacity="0.8"/>
<rect x="10.2" y="8.2" width="1.1" height="2.3" fill="#8a6fd0" opacity="0.8"/>
<path d="M4.8 15.5 L7.4 17.9 L11.4 14" stroke="#fff" stroke-width="1.4" fill="none"/></svg><span>80</span></div></td>
<td><div class="b bp"><svg class="ic" viewBox="0 0 30 30" overflow="visible"><g transform="translate(0.2,5.2)">
<rect x="0.8" y="6.9" width="3.2" height="7" fill="#fff"/>
<path d="M4.2 7.6 L6.2 5 Q6.8 4.2 7 3 Q7.3 2.5 8.1 2.5 Q9.1 2.6 9 3.8 L8.7 6.6 L11.6 6.6 Q12.4 6.8 12.3 7.8 L11.9 13.3 Q11.7 14.3 10.5 14.3 L6 14.2 Q5 14 4.2 13.4" stroke="#fff" stroke-width="1.15" fill="none"/>
</g></svg><span>0</span></div></td>
<td><div class="b bd"><svg class="ic" viewBox="0 0 30 30" overflow="visible"><rect x="0.6" y="8" width="1.3" height="12" fill="currentColor"/>
<rect x="0.6" y="18.9" width="16.6" height="1.1" fill="currentColor"/>
<path d="M3.6 17 L7.4 13 L9.6 15.6 L14.2 11" stroke="currentColor" stroke-width="1.9" fill="none"/>
<path d="M12.2 9.4 L16.1 8.8 L15.6 12.7 Z" fill="currentColor"/></svg><span>0%</span></div></td>
<td><div class="b bg"><svg class="ic" viewBox="0 0 30 30" overflow="visible"><circle cx="6.5" cy="10.7" r="3.2" fill="#333"/>
<path d="M1.3 19.8 V16.2 Q1.3 13.8 3.8 13.8 H9.7 V19.8 Z" fill="#333"/>
<path d="M11 13.9 L16.6 19.2 M16.6 13.9 L11 19.2" stroke="#333" stroke-width="1.7"/></svg><span>0</span></div></td>
<td><div class="b bg"><svg class="ic" viewBox="0 0 30 30" overflow="visible"><rect x="0.6" y="8" width="1.3" height="12" fill="currentColor"/>
<rect x="0.6" y="18.9" width="16.6" height="1.1" fill="currentColor"/>
<path d="M3.6 17 L7.4 13 L9.6 15.6 L14.2 11" stroke="currentColor" stroke-width="1.9" fill="none"/>
<path d="M12.2 9.4 L16.1 8.8 L15.6 12.7 Z" fill="currentColor"/></svg><span>0%</span></div></td>
<td><svg class="th" style="margin-left:14px;margin-top:1px" viewBox="0 0 16 16" overflow="visible"><rect x="0.8" y="6.9" width="3.2" height="7" fill="#f00"/>
<rect x="1.3" y="12" width="0.9" height="0.9" fill="#f3e8e0"/>
<path d="M4.2 7.6 L6.2 5 Q6.8 4.2 7 3 Q7.3 2.5 8.1 2.5 Q9.1 2.6 9 3.8 L8.7 6.6 L11.6 6.6 Q12.4 6.8 12.3 7.8 L11.9 13.3 Q11.7 14.3 10.5 14.3 L6 14.2 Q5 14 4.2 13.4" stroke="#f00" stroke-width="1.05" fill="none"/></svg></td>
<td><div class="b bs"><svg class="ic" viewBox="0 0 30 30" overflow="visible"><rect x="0.6" y="8" width="1.3" height="12" fill="currentColor"/>
<rect x="0.6" y="18.9" width="16.6" height="1.1" fill="currentColor"/>
<path d="M3.6 17 L7.4 13 L9.6 15.6 L14.2 11" stroke="currentColor" stroke-width="1.9" fill="none"/>
<path d="M12.2 9.4 L16.1 8.8 L15.6 12.7 Z" fill="currentColor"/></svg><span>125</span></div></td>
<td><div class="b bd"><svg class="ic" viewBox="0 0 30 30" overflow="visible"><rect x="0.6" y="8" width="1.3" height="12" fill="currentColor"/>
<rect x="0.6" y="18.9" width="16.6" height="1.1" fill="currentColor"/>
<path d="M3.6 17 L7.4 13 L9.6 15.6 L14.2 11" stroke="currentColor" stroke-width="1.9" fill="none"/>
<path d="M12.2 9.4 L16.1 8.8 L15.6 12.7 Z" fill="currentColor"/></svg><span>0%</span></div></td>
<td><div class="b bw"><svg class="ic" viewBox="0 0 30 30" overflow="visible"><circle cx="7" cy="14" r="5.5" stroke="#fff" stroke-width="1.2" fill="none"/>
<rect x="4" y="11" width="1.6" height="1.7" fill="#fff"/>
<rect x="8" y="11" width="1.6" height="1.7" fill="#fff"/>
<path d="M4.3 15.3 Q7 18.6 9.7 15.3" stroke="#fff" stroke-width="1.1" fill="none"/></svg><span>0</span></div></td>
<td><div class="b bw"><svg class="ic" viewBox="0 0 30 30" overflow="visible"><circle cx="7" cy="14" r="5.5" stroke="#fff" stroke-width="1.2" fill="none"/>
<rect x="4" y="11" width="1.6" height="1.7" fill="#fff"/>
<rect x="8" y="11" width="1.6" height="1.7" fill="#fff"/>
<path d="M3.9 16.9 Q7 12.2 10.1 16.9" stroke="#fff" stroke-width="1.1" fill="none"/></svg><span>0</span></div></td>
<td><div class="b bw"><svg class="ic" viewBox="0 0 30 30" overflow="visible"><circle cx="7" cy="14" r="5.5" stroke="#fff" stroke-width="1.2" fill="none"/>
<rect x="4" y="11" width="1.6" height="1.7" fill="#fff"/>
<rect x="8" y="11" width="1.6" height="1.7" fill="#fff"/>
<rect x="4" y="15.2" width="6" height="1.2" fill="#fff"/></svg><span>0</span></div></td>
<td><svg class="th" style="margin-left:14px;margin-top:1px" viewBox="0 0 16 16" overflow="visible"><rect x="0.8" y="6.9" width="3.2" height="7" fill="#f00"/>
<rect x="1.3" y="12" width="0.9" height="0.9" fill="#f3e8e0"/>
<path d="M4.2 7.6 L6.2 5 Q6.8 4.2 7 3 Q7.3 2.5 8.1 2.5 Q9.1 2.6 9 3.8 L8.7 6.6 L11.6 6.6 Q12.4 6.8 12.3 7.8 L11.9 13.3 Q11.7 14.3 10.5 14.3 L6 14.2 Q5 14 4.2 13.4" stroke="#f00" stroke-width="1.05" fill="none"/></svg></td>
</tr>
<tr>
<td>Edgar Ulises<br>Ortega Rojas</td>
<td><div class="b bp"><svg class="ic" viewBox="0 0 30 30" overflow="visible"><circle cx="6.5" cy="11.2" r="3.4" fill="#fff"/>
<path d="M0.6 20.3 V16.4 Q0.6 13.3 3.6 13.3 H9.2 Q11.8 13.3 11.8 16 V20.3 Z" fill="#fff" stroke="#337ab7" stroke-width="0.6"/>
<path d="M11.6 11.8 H14.8 V14.8 H17.9 V17.3 H14.8 V20.3 H11.6 V17.3 H8.6 V14.8 H11.6 Z" fill="#fff" stroke="#337ab7" stroke-width="0.8"/></svg><span>73</span></div></td>
<td><div class="b bp"><svg class="ic" viewBox="0 0 30 30" overflow="visible"><path d="M1 9 H14.4 V20.8 H1 Z M2.1 11.9 V19.9 H12.9 V11.9 Z" fill="#fff" fill-rule="evenodd"/>
<rect x="2.9" y="6.8" width="3.7" height="3.6" rx="0.8" fill="#fff"/>
<rect x="8.9" y="6.8" width="3.7" height="3.6" rx="0.8" fill="#fff"/>
<rect x="4.2" y="8.2" width="1.1" height="2.3" fill="#8a6fd0" opacity="0.8"/>
<rect x="10.2" y="8.2" width="1.1" height="2.3" fill="#8a6fd0" opacity="0.8"/>
<path d="M4.8 15.5 L7.4 17.9 L11.4 14" stroke="#fff" stroke-width="1.4" fill="none"/></svg><span>71</span></div></td>
<td><div class="b bp"><svg class="ic" viewBox="0 0 30 30" overflow="visible"><g transform="translate(0.2,5.2)">
<rect x="0.8" y="6.9" width="3.2" height="7" fill="#fff"/>
<path d="M4.2 7.6 L6.2 5 Q6.8 4.2 7 3 Q7.3 2.5 8.1 2.5 Q9.1 2.6 9 3.8 L8.7 6.6 L11.6 6.6 Q12.4 6.8 12.3 7.8 L11.9 13.3 Q11.7 14.3 10.5 14.3 L6 14.2 Q5 14 4.2 13.4" stroke="#fff" stroke-width="1.15" fill="none"/>
</g></svg><span>0</span></div></td>
<td><div class="b bd"><svg class="ic" viewBox="0 0 30 30" overflow="visible"><rect x="0.6" y="8" width="1.3" height="12" fill="currentColor"/>
<rect x="0.6" y="18.9" width="16.6" height="1.1" fill="currentColor"/>
<path d="M3.6 17 L7.4 13 L9.6 15.6 L14.2 11" stroke="currentColor" stroke-width="1.9" fill="none"/>
<path d="M12.2 9.4 L16.1 8.8 L15.6 12.7 Z" fill="currentColor"/></svg><span>0%</span></div></td>
<td><div class="b bg"><svg class="ic" viewBox="0 0 30 30" overflow="visible"><circle cx="6.5" cy="10.7" r="3.2" fill="#333"/>
<path d="M1.3 19.8 V16.2 Q1.3 13.8 3.8 13.8 H9.7 V19.8 Z" fill="#333"/>
<path d="M11 13.9 L16.6 19.2 M16.6 13.9 L11 19.2" stroke="#333" stroke-width="1.7"/></svg><span>0</span></div></td>
<td><div class="b bg"><svg class="ic" viewBox="0 0 30 30" overflow="visible"><rect x="0.6" y="8" width="1.3" height="12" fill="currentColor"/>
<rect x="0.6" y="18.9" width="16.6" height="1.1" fill="currentColor"/>
<path d="M3.6 17 L7.4 13 L9.6 15.6 L14.2 11" stroke="currentColor" stroke-width="1.9" fill="none"/>
<path d="M12.2 9.4 L16.1 8.8 L15.6 12.7 Z" fill="currentColor"/></svg><span>0%</span></div></td>
<td><svg class="th" style="margin-left:14px;margin-top:1px" viewBox="0 0 16 16" overflow="visible"><rect x="0.8" y="6.9" width="3.2" height="7" fill="#f00"/>
<rect x="1.3" y="12" width="0.9" height="0.9" fill="#f3e8e0"/>
<path d="M4.2 7.6 L6.2 5 Q6.8 4.2 7 3 Q7.3 2.5 8.1 2.5 Q9.1 2.6 9 3.8 L8.7 6.6 L11.6 6.6 Q12.4 6.8 12.3 7.8 L11.9 13.3 Q11.7 14.3 10.5 14.3 L6 14.2 Q5 14 4.2 13.4" stroke="#f00" stroke-width="1.05" fill="none"/></svg></td>
<td><div class="b bs"><svg class="ic" viewBox="0 0 30 30" overflow="visible"><rect x="0.6" y="8" width="1.3" height="12" fill="currentColor"/>
<rect x="0.6" y="18.9" width="16.6" height="1.1" fill="currentColor"/>
<path d="M3.6 17 L7.4 13 L9.6 15.6 L14.2 11" stroke="currentColor" stroke-width="1.9" fill="none"/>
<path d="M12.2 9.4 L16.1 8.8 L15.6 12.7 Z" fill="currentColor"/></svg><span>125</span></div></td>
<td><div class="b bd"><svg class="ic" viewBox="0 0 30 30" overflow="visible"><rect x="0.6" y="8" width="1.3" height="12" fill="currentColor"/>
<rect x="0.6" y="18.9" width="16.6" height="1.1" fill="currentColor"/>
<path d="M3.6 17 L7.4 13 L9.6 15.6 L14.2 11" stroke="currentColor" stroke-width="1.9" fill="none"/>
<path d="M12.2 9.4 L16.1 8.8 L15.6 12.7 Z" fill="currentColor"/></svg><span>0%</span></div></td>
<td><div class="b bw"><svg class="ic" viewBox="0 0 30 30" overflow="visible"><circle cx="7" cy="14" r="5.5" stroke="#fff" stroke-width="1.2" fill="none"/>
<rect x="4" y="11" width="1.6" height="1.7" fill="#fff"/>
<rect x="8" y="11" width="1.6" height="1.7" fill="#fff"/>
<path d="M4.3 15.3 Q7 18.6 9.7 15.3" stroke="#fff" stroke-width="1.1" fill="none"/></svg><span>0</span></div></td>
<td><div class="b bw"><svg class="ic" viewBox="0 0 30 30" overflow="visible"><circle cx="7" cy="14" r="5.5" stroke="#fff" stroke-width="1.2" fill="none"/>
<rect x="4" y="11" width="1.6" height="1.7" fill="#fff"/>
<rect x="8" y="11" width="1.6" height="1.7" fill="#fff"/>
<path d="M3.9 16.9 Q7 12.2 10.1 16.9" stroke="#fff" stroke-width="1.1" fill="none"/></svg><span>0</span></div></td>
<td><div class="b bw"><svg class="ic" viewBox="0 0 30 30" overflow="visible"><circle cx="7" cy="14" r="5.5" stroke="#fff" stroke-width="1.2" fill="none"/>
<rect x="4" y="11" width="1.6" height="1.7" fill="#fff"/>
<rect x="8" y="11" width="1.6" height="1.7" fill="#fff"/>
<rect x="4" y="15.2" width="6" height="1.2" fill="#fff"/></svg><span>0</span></div></td>
<td><svg class="th" style="margin-left:14px;margin-top:1px" viewBox="0 0 16 16" overflow="visible"><rect x="0.8" y="6.9" width="3.2" height="7" fill="#f00"/>
<rect x="1.3" y="12" width="0.9" height="0.9" fill="#f3e8e0"/>
<path d="M4.2 7.6 L6.2 5 Q6.8 4.2 7 3 Q7.3 2.5 8.1 2.5 Q9.1 2.6 9 3.8 L8.7 6.6 L11.6 6.6 Q12.4 6.8 12.3 7.8 L11.9 13.3 Q11.7 14.3 10.5 14.3 L6 14.2 Q5 14 4.2 13.4" stroke="#f00" stroke-width="1.05" fill="none"/></svg></td>
</tr>
<tr>
<td>Edna Denise<br>Avalos Romero</td>
<td><div class="b bp"><svg class="ic" viewBox="0 0 30 30" overflow="visible"><circle cx="6.5" cy="11.2" r="3.4" fill="#fff"/>
<path d="M0.6 20.3 V16.4 Q0.6 13.3 3.6 13.3 H9.2 Q11.8 13.3 11.8 16 V20.3 Z" fill="#fff" stroke="#337ab7" stroke-width="0.6"/>
<path d="M11.6 11.8 H14.8 V14.8 H17.9 V17.3 H14.8 V20.3 H11.6 V17.3 H8.6 V14.8 H11.6 Z" fill="#fff" stroke="#337ab7" stroke-width="0.8"/></svg><span>84</span></div></td>
<td><div class="b bp"><svg class="ic" viewBox="0 0 30 30" overflow="visible"><path d="M1 9 H14.4 V20.8 H1 Z M2.1 11.9 V19.9 H12.9 V11.9 Z" fill="#fff" fill-rule="evenodd"/>
<rect x="2.9" y="6.8" width="3.7" height="3.6" rx="0.8" fill="#fff"/>
<rect x="8.9" y="6.8" width="3.7" height="3.6" rx="0.8" fill="#fff"/>
<rect x="4.2" y="8.2" width="1.1" height="2.3" fill="#8a6fd0" opacity="0.8"/>
<rect x="10.2" y="8.2" width="1.1" height="2.3" fill="#8a6fd0" opacity="0.8"/>
<path d="M4.8 15.5 L7.4 17.9 L11.4 14" stroke="#fff" stroke-width="1.4" fill="none"/></svg><span>53</span></div></td>
<td><div class="b bp"><svg class="ic" viewBox="0 0 30 30" overflow="visible"><g transform="translate(0.2,5.2)">
<rect x="0.8" y="6.9" width="3.2" height="7" fill="#fff"/>
<path d="M4.2 7.6 L6.2 5 Q6.8 4.2 7 3 Q7.3 2.5 8.1 2.5 Q9.1 2.6 9 3.8 L8.7 6.6 L11.6 6.6 Q12.4 6.8 12.3 7.8 L11.9 13.3 Q11.7 14.3 10.5 14.3 L6 14.2 Q5 14 4.2 13.4" stroke="#fff" stroke-width="1.15" fill="none"/>
</g></svg><span>0</span></div></td>
<td><div class="b bd"><svg class="ic" viewBox="0 0 30 30" overflow="visible"><rect x="0.6" y="8" width="1.3" height="12" fill="currentColor"/>
<rect x="0.6" y="18.9" width="16.6" height="1.1" fill="currentColor"/>
<path d="M3.6 17 L7.4 13 L9.6 15.6 L14.2 11" stroke="currentColor" stroke-width="1.9" fill="none"/>
<path d="M12.2 9.4 L16.1 8.8 L15.6 12.7 Z" fill="currentColor"/></svg><span>0%</span></div></td>
<td><div class="b bg"><svg class="ic" viewBox="0 0 30 30" overflow="visible"><circle cx="6.5" cy="10.7" r="3.2" fill="#333"/>
<path d="M1.3 19.8 V16.2 Q1.3 13.8 3.8 13.8 H9.7 V19.8 Z" fill="#333"/>
<path d="M11 13.9 L16.6 19.2 M16.6 13.9 L11 19.2" stroke="#333" stroke-width="1.7"/></svg><span>0</span></div></td>
<td><div class="b bg"><svg class="ic" viewBox="0 0 30 30" overflow="visible"><rect x="0.6" y="8" width="1.3" height="12" fill="currentColor"/>
<rect x="0.6" y="18.9" width="16.6" height="1.1" fill="currentColor"/>
<path d="M3.6 17 L7.4 13 L9.6 15.6 L14.2 11" stroke="currentColor" stroke-width="1.9" fill="none"/>
<path d="M12.2 9.4 L16.1 8.8 L15.6 12.7 Z" fill="currentColor"/></svg><span>0%</span></div></td>
<td><svg class="th" style="margin-left:14px;margin-top:1px" viewBox="0 0 16 16" overflow="visible"><rect x="0.8" y="6.9" width="3.2" height="7" fill="#f00"/>
<rect x="1.3" y="12" width="0.9" height="0.9" fill="#f3e8e0"/>
<path d="M4.2 7.6 L6.2 5 Q6.8 4.2 7 3 Q7.3 2.5 8.1 2.5 Q9.1 2.6 9 3.8 L8.7 6.6 L11.6 6.6 Q12.4 6.8 12.3 7.8 L11.9 13.3 Q11.7 14.3 10.5 14.3 L6 14.2 Q5 14 4.2 13.4" stroke="#f00" stroke-width="1.05" fill="none"/></svg></td>
<td><div class="b bs"><svg class="ic" viewBox="0 0 30 30" overflow="visible"><rect x="0.6" y="8" width="1.3" height="12" fill="currentColor"/>
<rect x="0.6" y="18.9" width="16.6" height="1.1" fill="currentColor"/>
<path d="M3.6 17 L7.4 13 L9.6 15.6 L14.2 11" stroke="currentColor" stroke-width="1.9" fill="none"/>
<path d="M12.2 9.4 L16.1 8.8 L15.6 12.7 Z" fill="currentColor"/></svg><span>125</span></div></td>
<td><div class="b bd"><svg class="ic" viewBox="0 0 30 30" overflow="visible"><rect x="0.6" y="8" width="1.3" height="12" fill="currentColor"/>
<rect x="0.6" y="18.9" width="16.6" height="1.1" fill="currentColor"/>
<path d="M3.6 17 L7.4 13 L9.6 15.6 L14.2 11" stroke="currentColor" stroke-width="1.9" fill="none"/>
<path d="M12.2 9.4 L16.1 8.8 L15.6 12.7 Z" fill="currentColor"/></svg><span>0%</span></div></td>
<td><div class="b bw"><svg class="ic" viewBox="0 0 30 30" overflow="visible"><circle cx="7" cy="14" r="5.5" stroke="#fff" stroke-width="1.2" fill="none"/>
<rect x="4" y="11" width="1.6" height="1.7" fill="#fff"/>
<rect x="8" y="11" width="1.6" height="1.7" fill="#fff"/>
<path d="M4.3 15.3 Q7 18.6 9.7 15.3" stroke="#fff" stroke-width="1.1" fill="none"/></svg><span>0</span></div></td>
<td><div class="b bw"><svg class="ic" viewBox="0 0 30 30" overflow="visible"><circle cx="7" cy="14" r="5.5" stroke="#fff" stroke-width="1.2" fill="none"/>
<rect x="4" y="11" width="1.6" height="1.7" fill="#fff"/>
<rect x="8" y="11" width="1.6" height="1.7" fill="#fff"/>
<path d="M3.9 16.9 Q7 12.2 10.1 16.9" stroke="#fff" stroke-width="1.1" fill="none"/></svg><span>0</span></div></td>
<td><div class="b bw"><svg class="ic" viewBox="0 0 30 30" overflow="visible"><circle cx="7" cy="14" r="5.5" stroke="#fff" stroke-width="1.2" fill="none"/>
<rect x="4" y="11" width="1.6" height="1.7" fill="#fff"/>
<rect x="8" y="11" width="1.6" height="1.7" fill="#fff"/>
<rect x="4" y="15.2" width="6" height="1.2" fill="#fff"/></svg><span>0</span></div></td>
<td><svg class="th" style="margin-left:14px;margin-top:1px" viewBox="0 0 16 16" overflow="visible"><rect x="0.8" y="6.9" width="3.2" height="7" fill="#f00"/>
<rect x="1.3" y="12" width="0.9" height="0.9" fill="#f3e8e0"/>
<path d="M4.2 7.6 L6.2 5 Q6.8 4.2 7 3 Q7.3 2.5 8.1 2.5 Q9.1 2.6 9 3.8 L8.7 6.6 L11.6 6.6 Q12.4 6.8 12.3 7.8 L11.9 13.3 Q11.7 14.3 10.5 14.3 L6 14.2 Q5 14 4.2 13.4" stroke="#f00" stroke-width="1.05" fill="none"/></svg></td>
</tr>
<tr>
<td>Eduardo Cruz Cruz</td>
<td><div class="b bp"><svg class="ic" viewBox="0 0 30 30" overflow="visible"><circle cx="6.5" cy="11.2" r="3.4" fill="#fff"/>
<path d="M0.6 20.3 V16.4 Q0.6 13.3 3.6 13.3 H9.2 Q11.8 13.3 11.8 16 V20.3 Z" fill="#fff" stroke="#337ab7" stroke-width="0.6"/>
<path d="M11.6 11.8 H14.8 V14.8 H17.9 V17.3 H14.8 V20.3 H11.6 V17.3 H8.6 V14.8 H11.6 Z" fill="#fff" stroke="#337ab7" stroke-width="0.8"/></svg><span>29</span></div></td>
<td><div class="b bp"><svg class="ic" viewBox="0 0 30 30" overflow="visible"><path d="M1 9 H14.4 V20.8 H1 Z M2.1 11.9 V19.9 H12.9 V11.9 Z" fill="#fff" fill-rule="evenodd"/>
<rect x="2.9" y="6.8" width="3.7" height="3.6" rx="0.8" fill="#fff"/>
<rect x="8.9" y="6.8" width="3.7" height="3.6" rx="0.8" fill="#fff"/>
<rect x="4.2" y="8.2" width="1.1" height="2.3" fill="#8a6fd0" opacity="0.8"/>
<rect x="10.2" y="8.2" width="1.1" height="2.3" fill="#8a6fd0" opacity="0.8"/>
<path d="M4.8 15.5 L7.4 17.9 L11.4 14" stroke="#fff" stroke-width="1.4" fill="none"/></svg><span>36</span></div></td>
<td><div class="b bp"><svg class="ic" viewBox="0 0 30 30" overflow="visible"><g transform="translate(0.2,5.2)">
<rect x="0.8" y="6.9" width="3.2" height="7" fill="#fff"/>
<path d="M4.2 7.6 L6.2 5 Q6.8 4.2 7 3 Q7.3 2.5 8.1 2.5 Q9.1 2.6 9 3.8 L8.7 6.6 L11.6 6.6 Q12.4 6.8 12.3 7.8 L11.9 13.3 Q11.7 14.3 10.5 14.3 L6 14.2 Q5 14 4.2 13.4" stroke="#fff" stroke-width="1.15" fill="none"/>
</g></svg><span>0</span></div></td>
<td><div class="b bd"><svg class="ic" viewBox="0 0 30 30" overflow="visible"><rect x="0.6" y="8" width="1.3" height="12" fill="currentColor"/>
<rect x="0.6" y="18.9" width="16.6" height="1.1" fill="currentColor"/>
<path d="M3.6 17 L7.4 13 L9.6 15.6 L14.2 11" stroke="currentColor" stroke-width="1.9" fill="none"/>
<path d="M12.2 9.4 L16.1 8.8 L15.6 12.7 Z" fill="currentColor"/></svg><span>0%</span></div></td>
<td><div class="b bg"><svg class="ic" viewBox="0 0 30 30" overflow="visible"><circle cx="6.5" cy="10.7" r="3.2" fill="#333"/>
<path d="M1.3 19.8 V16.2 Q1.3 13.8 3.8 13.8 H9.7 V19.8 Z" fill="#333"/>
<path d="M11 13.9 L16.6 19.2 M16.6 13.9 L11 19.2" stroke="#333" stroke-width="1.7"/></svg><span>0</span></div></td>
<td><div class="b bg"><svg class="ic" viewBox="0 0 30 30" overflow="visible"><rect x="0.6" y="8" width="1.3" height="12" fill="currentColor"/>
<rect x="0.6" y="18.9" width="16.6" height="1.1" fill="currentColor"/>
<path d="M3.6 17 L7.4 13 L9.6 15.6 L14.2 11" stroke="currentColor" stroke-width="1.9" fill="none"/>
<path d="M12.2 9.4 L16.1 8.8 L15.6 12.7 Z" fill="currentColor"/></svg><span>0%</span></div></td>
<td><svg class="th" style="margin-left:14px;margin-top:1px" viewBox="0 0 16 16" overflow="visible"><rect x="0.8" y="6.9" width="3.2" height="7" fill="#f00"/>
<rect x="1.3" y="12" width="0.9" height="0.9" fill="#f3e8e0"/>
<path d="M4.2 7.6 L6.2 5 Q6.8 4.2 7 3 Q7.3 2.5 8.1 2.5 Q9.1 2.6 9 3.8 L8.7 6.6 L11.6 6.6 Q12.4 6.8 12.3 7.8 L11.9 13.3 Q11.7 14.3 10.5 14.3 L6 14.2 Q5 14 4.2 13.4" stroke="#f00" stroke-width="1.05" fill="none"/></svg></td>
<td><div class="b bs"><svg class="ic" viewBox="0 0 30 30" overflow="visible"><rect x="0.6" y="8" width="1.3" height="12" fill="currentColor"/>
<rect x="0.6" y="18.9" width="16.6" height="1.1" fill="currentColor"/>
<path d="M3.6 17 L7.4 13 L9.6 15.6 L14.2 11" stroke="currentColor" stroke-width="1.9" fill="none"/>
<path d="M12.2 9.4 L16.1 8.8 L15.6 12.7 Z" fill="currentColor"/></svg><span>125</span></div></td>
<td><div class="b bd"><svg class="ic" viewBox="0 0 30 30" overflow="visible"><rect x="0.6" y="8" width="1.3" height="12" fill="currentColor"/>
<rect x="0.6" y="18.9" width="16.6" height="1.1" fill="currentColor"/>
<path d="M3.6 17 L7.4 13 L9.6 15.6 L14.2 11" stroke="currentColor" stroke-width="1.9" fill="none"/>
<path d="M12.2 9.4 L16.1 8.8 L15.6 12.7 Z" fill="currentColor"/></svg><span>0%</span></div></td>
<td><div class="b bw"><svg class="ic" viewBox="0 0 30 30" overflow="visible"><circle cx="7" cy="14" r="5.5" stroke="#fff" stroke-width="1.2" fill="none"/>
<rect x="4" y="11" width="1.6" height="1.7" fill="#fff"/>
<rect x="8" y="11" width="1.6" height="1.7" fill="#fff"/>
<path d="M4.3 15.3 Q7 18.6 9.7 15.3" stroke="#fff" stroke-width="1.1" fill="none"/></svg><span>0</span></div></td>
<td><div class="b bw"><svg class="ic" viewBox="0 0 30 30" overflow="visible"><circle cx="7" cy="14" r="5.5" stroke="#fff" stroke-width="1.2" fill="none"/>
<rect x="4" y="11" width="1.6" height="1.7" fill="#fff"/>
<rect x="8" y="11" width="1.6" height="1.7" fill="#fff"/>
<path d="M3.9 16.9 Q7 12.2 10.1 16.9" stroke="#fff" stroke-width="1.1" fill="none"/></svg><span>0</span></div></td>
<td><div class="b bw"><svg class="ic" viewBox="0 0 30 30" overflow="visible"><circle cx="7" cy="14" r="5.5" stroke="#fff" stroke-width="1.2" fill="none"/>
<rect x="4" y="11" width="1.6" height="1.7" fill="#fff"/>
<rect x="8" y="11" width="1.6" height="1.7" fill="#fff"/>
<rect x="4" y="15.2" width="6" height="1.2" fill="#fff"/></svg><span>0</span></div></td>
<td><svg class="th" style="margin-left:14px;margin-top:1px" viewBox="0 0 16 16" overflow="visible"><rect x="0.8" y="6.9" width="3.2" height="7" fill="#f00"/>
<rect x="1.3" y="12" width="0.9" height="0.9" fill="#f3e8e0"/>
<path d="M4.2 7.6 L6.2 5 Q6.8 4.2 7 3 Q7.3 2.5 8.1 2.5 Q9.1 2.6 9 3.8 L8.7 6.6 L11.6 6.6 Q12.4 6.8 12.3 7.8 L11.9 13.3 Q11.7 14.3 10.5 14.3 L6 14.2 Q5 14 4.2 13.4" stroke="#f00" stroke-width="1.05" fill="none"/></svg></td>
</tr>
<tr>
<td>Ericka Rosario<br>Reza Garcia</td>
<td><div class="b bp"><svg class="ic" viewBox="0 0 30 30" overflow="visible"><circle cx="6.5" cy="11.2" r="3.4" fill="#fff"/>
<path d="M0.6 20.3 V16.4 Q0.6 13.3 3.6 13.3 H9.2 Q11.8 13.3 11.8 16 V20.3 Z" fill="#fff" stroke="#337ab7" stroke-width="0.6"/>
<path d="M11.6 11.8 H14.8 V14.8 H17.9 V17.3 H14.8 V20.3 H11.6 V17.3 H8.6 V14.8 H11.6 Z" fill="#fff" stroke="#337ab7" stroke-width="0.8"/></svg><span>61</span></div></td>
<td><div class="b bp"><svg class="ic" viewBox="0 0 30 30" overflow="visible"><path d="M1 9 H14.4 V20.8 H1 Z M2.1 11.9 V19.9 H12.9 V11.9 Z" fill="#fff" fill-rule="evenodd"/>
<rect x="2.9" y="6.8" width="3.7" height="3.6" rx="0.8" fill="#fff"/>
<rect x="8.9" y="6.8" width="3.7" height="3.6" rx="0.8" fill="#fff"/>
<rect x="4.2" y="8.2" width="1.1" height="2.3" fill="#8a6fd0" opacity="0.8"/>
<rect x="10.2" y="8.2" width="1.1" height="2.3" fill="#8a6fd0" opacity="0.8"/>
<path d="M4.8 15.5 L7.4 17.9 L11.4 14" stroke="#fff" stroke-width="1.4" fill="none"/></svg><span>42</span></div></td>
<td><div class="b bp"><svg class="ic" viewBox="0 0 30 30" overflow="visible"><g transform="translate(0.2,5.2)">
<rect x="0.8" y="6.9" width="3.2" height="7" fill="#fff"/>
<path d="M4.2 7.6 L6.2 5 Q6.8 4.2 7 3 Q7.3 2.5 8.1 2.5 Q9.1 2.6 9 3.8 L8.7 6.6 L11.6 6.6 Q12.4 6.8 12.3 7.8 L11.9 13.3 Q11.7 14.3 10.5 14.3 L6 14.2 Q5 14 4.2 13.4" stroke="#fff" stroke-width="1.15" fill="none"/>
</g></svg><span>0</span></div></td>
<td><div class="b bd"><svg class="ic" viewBox="0 0 30 30" overflow="visible"><rect x="0.6" y="8" width="1.3" height="12" fill="currentColor"/>
<rect x="0.6" y="18.9" width="16.6" height="1.1" fill="currentColor"/>
<path d="M3.6 17 L7.4 13 L9.6 15.6 L14.2 11" stroke="currentColor" stroke-width="1.9" fill="none"/>
<path d="M12.2 9.4 L16.1 8.8 L15.6 12.7 Z" fill="currentColor"/></svg><span>0%</span></div></td>
<td><div class="b bg"><svg class="ic" viewBox="0 0 30 30" overflow="visible"><circle cx="6.5" cy="10.7" r="3.2" fill="#333"/>
<path d="M1.3 19.8 V16.2 Q1.3 13.8 3.8 13.8 H9.7 V19.8 Z" fill="#333"/>
<path d="M11 13.9 L16.6 19.2 M16.6 13.9 L11 19.2" stroke="#333" stroke-width="1.7"/></svg><span>0</span></div></td>
<td><div class="b bg"><svg class="ic" viewBox="0 0 30 30" overflow="visible"><rect x="0.6" y="8" width="1.3" height="12" fill="currentColor"/>
<rect x="0.6" y="18.9" width="16.6" height="1.1" fill="currentColor"/>
<path d="M3.6 17 L7.4 13 L9.6 15.6 L14.2 11" stroke="currentColor" stroke-width="1.9" fill="none"/>
<path d="M12.2 9.4 L16.1 8.8 L15.6 12.7 Z" fill="currentColor"/></svg><span>0%</span></div></td>
<td><svg class="th" style="margin-left:14px;margin-top:1px" viewBox="0 0 16 16" overflow="visible"><rect x="0.8" y="6.9" width="3.2" height="7" fill="#f00"/>
<rect x="1.3" y="12" width="0.9" height="0.9" fill="#f3e8e0"/>
<path d="M4.2 7.6 L6.2 5 Q6.8 4.2 7 3 Q7.3 2.5 8.1 2.5 Q9.1 2.6 9 3.8 L8.7 6.6 L11.6 6.6 Q12.4 6.8 12.3 7.8 L11.9 13.3 Q11.7 14.3 10.5 14.3 L6 14.2 Q5 14 4.2 13.4" stroke="#f00" stroke-width="1.05" fill="none"/></svg></td>
<td><div class="b bs"><svg class="ic" viewBox="0 0 30 30" overflow="visible"><rect x="0.6" y="8" width="1.3" height="12" fill="currentColor"/>
<rect x="0.6" y="18.9" width="16.6" height="1.1" fill="currentColor"/>
<path d="M3.6 17 L7.4 13 L9.6 15.6 L14.2 11" stroke="currentColor" stroke-width="1.9" fill="none"/>
<path d="M12.2 9.4 L16.1 8.8 L15.6 12.7 Z" fill="currentColor"/></svg><span>125</span></div></td>
<td><div class="b bd"><svg class="ic" viewBox="0 0 30 30" overflow="visible"><rect x="0.6" y="8" width="1.3" height="12" fill="currentColor"/>
<rect x="0.6" y="18.9" width="16.6" height="1.1" fill="currentColor"/>
<path d="M3.6 17 L7.4 13 L9.6 15.6 L14.2 11" stroke="currentColor" stroke-width="1.9" fill="none"/>
<path d="M12.2 9.4 L16.1 8.8 L15.6 12.7 Z" fill="currentColor"/></svg><span>0%</span></div></td>
<td><div class="b bw"><svg class="ic" viewBox="0 0 30 30" overflow="visible"><circle cx="7" cy="14" r="5.5" stroke="#fff" stroke-width="1.2" fill="none"/>
<rect x="4" y="11" width="1.6" height="1.7" fill="#fff"/>
<rect x="8" y="11" width="1.6" height="1.7" fill="#fff"/>
<path d="M4.3 15.3 Q7 18.6 9.7 15.3" stroke="#fff" stroke-width="1.1" fill="none"/></svg><span>0</span></div></td>
<td><div class="b bw"><svg class="ic" viewBox="0 0 30 30" overflow="visible"><circle cx="7" cy="14" r="5.5" stroke="#fff" stroke-width="1.2" fill="none"/>
<rect x="4" y="11" width="1.6" height="1.7" fill="#fff"/>
<rect x="8" y="11" width="1.6" height="1.7" fill="#fff"/>
<path d="M3.9 16.9 Q7 12.2 10.1 16.9" stroke="#fff" stroke-width="1.1" fill="none"/></svg><span>0</span></div></td>
<td><div class="b bw"><svg class="ic" viewBox="0 0 30 30" overflow="visible"><circle cx="7" cy="14" r="5.5" stroke="#fff" stroke-width="1.2" fill="none"/>
<rect x="4" y="11" width="1.6" height="1.7" fill="#fff"/>
<rect x="8" y="11" width="1.6" height="1.7" fill="#fff"/>
<rect x="4" y="15.2" width="6" height="1.2" fill="#fff"/></svg><span>0</span></div></td>
<td><svg class="th" style="margin-left:14px;margin-top:1px" viewBox="0 0 16 16" overflow="visible"><rect x="0.8" y="6.9" width="3.2" height="7" fill="#f00"/>
<rect x="1.3" y="12" width="0.9" height="0.9" fill="#f3e8e0"/>
<path d="M4.2 7.6 L6.2 5 Q6.8 4.2 7 3 Q7.3 2.5 8.1 2.5 Q9.1 2.6 9 3.8 L8.7 6.6 L11.6 6.6 Q12.4 6.8 12.3 7.8 L11.9 13.3 Q11.7 14.3 10.5 14.3 L6 14.2 Q5 14 4.2 13.4" stroke="#f00" stroke-width="1.05" fill="none"/></svg></td>
</tr>
</tbody></table>
</body></html>
